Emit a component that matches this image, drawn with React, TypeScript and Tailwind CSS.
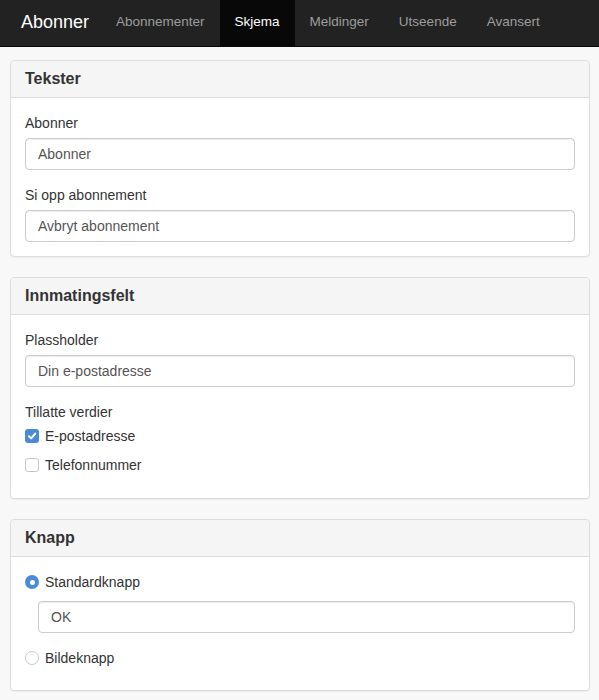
import React from "react";

const Panel = ({ title, children, last }: { title: string; children: React.ReactNode; last?: boolean }) => (
  <div className={`${last ? "" : "mb-5"} rounded-[4px] border border-[#dddddd] bg-white shadow-[0_1px_1px_rgba(0,0,0,0.05)]`}>
    <div className="h-[37px] rounded-t-[4px] border-b border-[#dddddd] bg-[#f5f5f5] px-[14px] pt-[9px] text-[16px] font-bold leading-[18px] text-[#333]">
      {title}
    </div>
    <div className="px-[14px] pt-[15px] pb-[14px]">{children}</div>
  </div>
);

const TextInput = ({ value }: { value: string }) => (
  <div className="flex h-[32px] items-center rounded-[4px] border border-[#cccccc] bg-white px-[12px] text-[14px] text-[#555] shadow-[inset_0_1px_1px_rgba(0,0,0,0.075)]">
    {value}
  </div>
);

const Check = ({ checked, label }: { checked: boolean; label: string }) => (
  <div className="flex h-5 items-center gap-[6px] text-[14px] text-[#333]">
    {checked ? (
      <div className="flex h-[14px] w-[14px] items-center justify-center rounded-[3px] bg-[#4a8bd6]">
        <svg width="10" height="10" viewBox="0 0 10 10">
          <path d="M2 5.2 L4.2 7.4 L8.2 2.6" stroke="white" strokeWidth="2" fill="none" strokeLinecap="round" strokeLinejoin="round" />
        </svg>
      </div>
    ) : (
      <div className="h-[14px] w-[14px] rounded-[3px] border border-[#c8c8c8] bg-white" />
    )}
    {label}
  </div>
);

const Radio = ({ checked, label }: { checked: boolean; label: string }) => (
  <div className="flex h-5 items-center gap-[6px] text-[14px] text-[#333]">
    {checked ? (
      <div className="flex h-[14px] w-[14px] items-center justify-center rounded-full bg-[#4a8bd6]">
        <div className="h-[5px] w-[5px] rounded-full bg-white" />
      </div>
    ) : (
      <div className="h-[14px] w-[14px] rounded-full border border-[#c8c8c8] bg-white" />
    )}
    {label}
  </div>
);

const Label = ({ children }: { children: React.ReactNode }) => (
  <div className="mb-[5px] h-5 text-[14px] leading-5 text-[#333]">{children}</div>
);

export default function App() {
  const tabs = ["Abonnementer", "Skjema", "Meldinger", "Utseende", "Avansert"];
  return (
    <div className="min-h-[700px] bg-[#f8f8f8] font-['Liberation_Sans',Helvetica,Arial,sans-serif]">
      <nav className="flex h-[47px] border-b border-[#080808] bg-[#222222]">
        <div className="flex w-[101px] items-center pl-[21px] pb-[2px] text-[18px] text-white">Abonner</div>
        {tabs.map((t) => (
          <div
            key={t}
            className={`flex items-center px-[15px] pb-[2px] text-[13.5px] ${
              t === "Skjema" ? "bg-[#080808] text-white" : "text-[#9d9d9d]"
            }`}
          >
            {t}
          </div>
        ))}
      </nav>
      <div className="pl-[10px] pr-[9px] pt-[13px]">
        <Panel title="Tekster">
          <Label>Abonner</Label>
          <TextInput value="Abonner" />
          <div className="mt-[15px]">
            <Label>Si opp abonnement</Label>
            <TextInput value="Avbryt abonnement" />
          </div>
        </Panel>
        <Panel title="Innmatingsfelt">
          <Label>Plassholder</Label>
          <TextInput value="Din e-postadresse" />
          <div className="mt-[15px] h-5 text-[14px] leading-5 text-[#333]">Tillatte verdier</div>
          <div className="flex flex-col gap-[9px] pt-[4px] pb-[9px]">
            <Check checked label="E-postadresse" />
            <Check checked={false} label="Telefonnummer" />
          </div>
        </Panel>
        <Panel title="Knapp" last>
          <Radio checked label="Standardknapp" />
          <div className="mt-[9px] pl-[13px]">
            <TextInput value="OK" />
          </div>
          <div className="mt-[15px] pb-[8px]">
            <Radio checked={false} label="Bildeknapp" />
          </div>
        </Panel>
      </div>
    </div>
  );
}
